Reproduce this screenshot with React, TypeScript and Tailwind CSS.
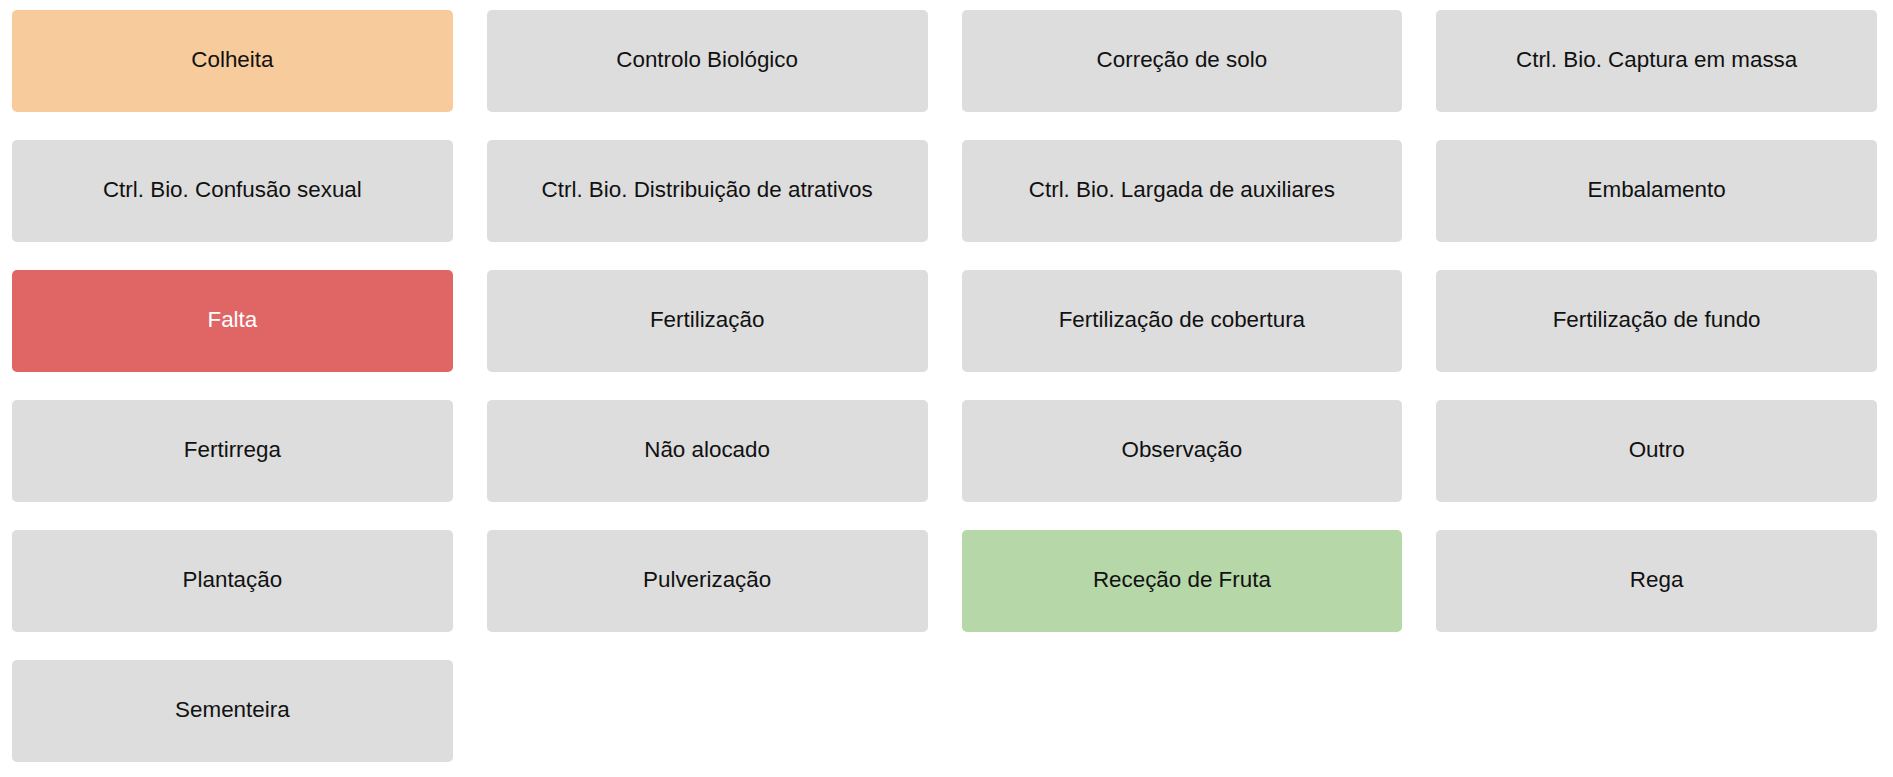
import React from "react";

const items: { label: string; cls: string }[] = [
  { label: "Colheita", cls: "bg-[#f8cb9c] text-[#111]" },
  { label: "Controlo Biológico", cls: "bg-[#dddddd] text-[#111]" },
  { label: "Correção de solo", cls: "bg-[#dddddd] text-[#111]" },
  { label: "Ctrl. Bio. Captura em massa", cls: "bg-[#dddddd] text-[#111]" },
  { label: "Ctrl. Bio. Confusão sexual", cls: "bg-[#dddddd] text-[#111]" },
  { label: "Ctrl. Bio. Distribuição de atrativos", cls: "bg-[#dddddd] text-[#111]" },
  { label: "Ctrl. Bio. Largada de auxiliares", cls: "bg-[#dddddd] text-[#111]" },
  { label: "Embalamento", cls: "bg-[#dddddd] text-[#111]" },
  { label: "Falta", cls: "bg-[#e06666] text-white" },
  { label: "Fertilização", cls: "bg-[#dddddd] text-[#111]" },
  { label: "Fertilização de cobertura", cls: "bg-[#dddddd] text-[#111]" },
  { label: "Fertilização de fundo", cls: "bg-[#dddddd] text-[#111]" },
  { label: "Fertirrega", cls: "bg-[#dddddd] text-[#111]" },
  { label: "Não alocado", cls: "bg-[#dddddd] text-[#111]" },
  { label: "Observação", cls: "bg-[#dddddd] text-[#111]" },
  { label: "Outro", cls: "bg-[#dddddd] text-[#111]" },
  { label: "Plantação", cls: "bg-[#dddddd] text-[#111]" },
  { label: "Pulverização", cls: "bg-[#dddddd] text-[#111]" },
  { label: "Receção de Fruta", cls: "bg-[#b6d7a8] text-[#111]" },
  { label: "Rega", cls: "bg-[#dddddd] text-[#111]" },
  { label: "Sementeira", cls: "bg-[#dddddd] text-[#111]" },
];

export default function App() {
  return (
    <div className="min-h-screen bg-white pt-[10px] pl-[12px] pr-[16px] font-['Liberation_Sans',Arial,sans-serif]">
      <div className="grid grid-cols-4 gap-x-[34px] gap-y-[28px]">
        {items.map((it) => (
          <div
            key={it.label}
            className={`h-[102px] rounded-[5px] flex items-center justify-center pb-[2px] text-[22.4px] leading-[1.2] ${it.cls}`}
          >
            {it.label}
          </div>
        ))}
      </div>
    </div>
  );
}
